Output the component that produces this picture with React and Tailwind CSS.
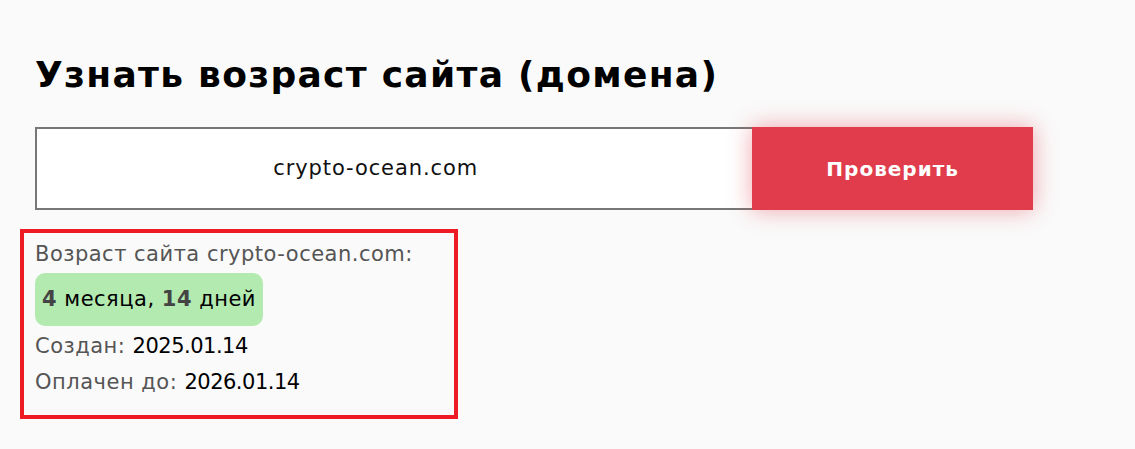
import React from "react";

const font = { fontFamily: '"DejaVu Sans", "Noto Sans", sans-serif' };

export default function App() {
  return (
    <div className="min-h-[449px] w-full bg-[#fafafa] pl-[35px] pt-[50px]" style={font}>
      {/* Title */}
      <h1 className="text-[36px] font-bold leading-[50px] tracking-[1.3px] text-black">
        Узнать возраст сайта (домена)
      </h1>

      {/* Search row */}
      <div className="mt-[27px] flex h-[83px] w-[998px]">
        <div className="flex w-[718px] items-center justify-center border-2 border-r-0 border-[#777] bg-white pr-[38px]">
          <span className="text-[21px] tracking-[0.9px] text-[#111]">crypto-ocean.com</span>
        </div>
        <button className="flex w-[281px] items-center justify-center bg-[#e03c4b] text-[20px] font-bold tracking-[1px] text-white shadow-[0_0_22px_rgba(224,60,75,0.45)]">
          Проверить
        </button>
      </div>

      {/* Result */}
      <div className="-ml-[15px] mt-[19px] w-[438px] border-4 border-[#ed1c24] pb-[18px] pl-[11px] pt-[6px] text-[21px] tracking-[0.5px]">
        <p className="leading-[30px] text-[#555]">Возраст сайта crypto-ocean.com:</p>
        <div className="mt-[4px] inline-flex h-[53px] items-center rounded-[10px] bg-[#b3eab0] px-[7px] text-black">
          <b className="text-[#444]">4</b>&nbsp;месяца,&nbsp;<b className="text-[#444]">14</b>&nbsp;дней
        </div>
        <p className="mt-[5px] leading-[30px] text-[#555]">
          Создан: <span className="tracking-[-0.5px] text-black">2025.01.14</span>
        </p>
        <p className="mt-[6px] leading-[30px] text-[#555]">
          Оплачен до: <span className="tracking-[-0.5px] text-black">2026.01.14</span>
        </p>
      </div>
    </div>
  );
}
